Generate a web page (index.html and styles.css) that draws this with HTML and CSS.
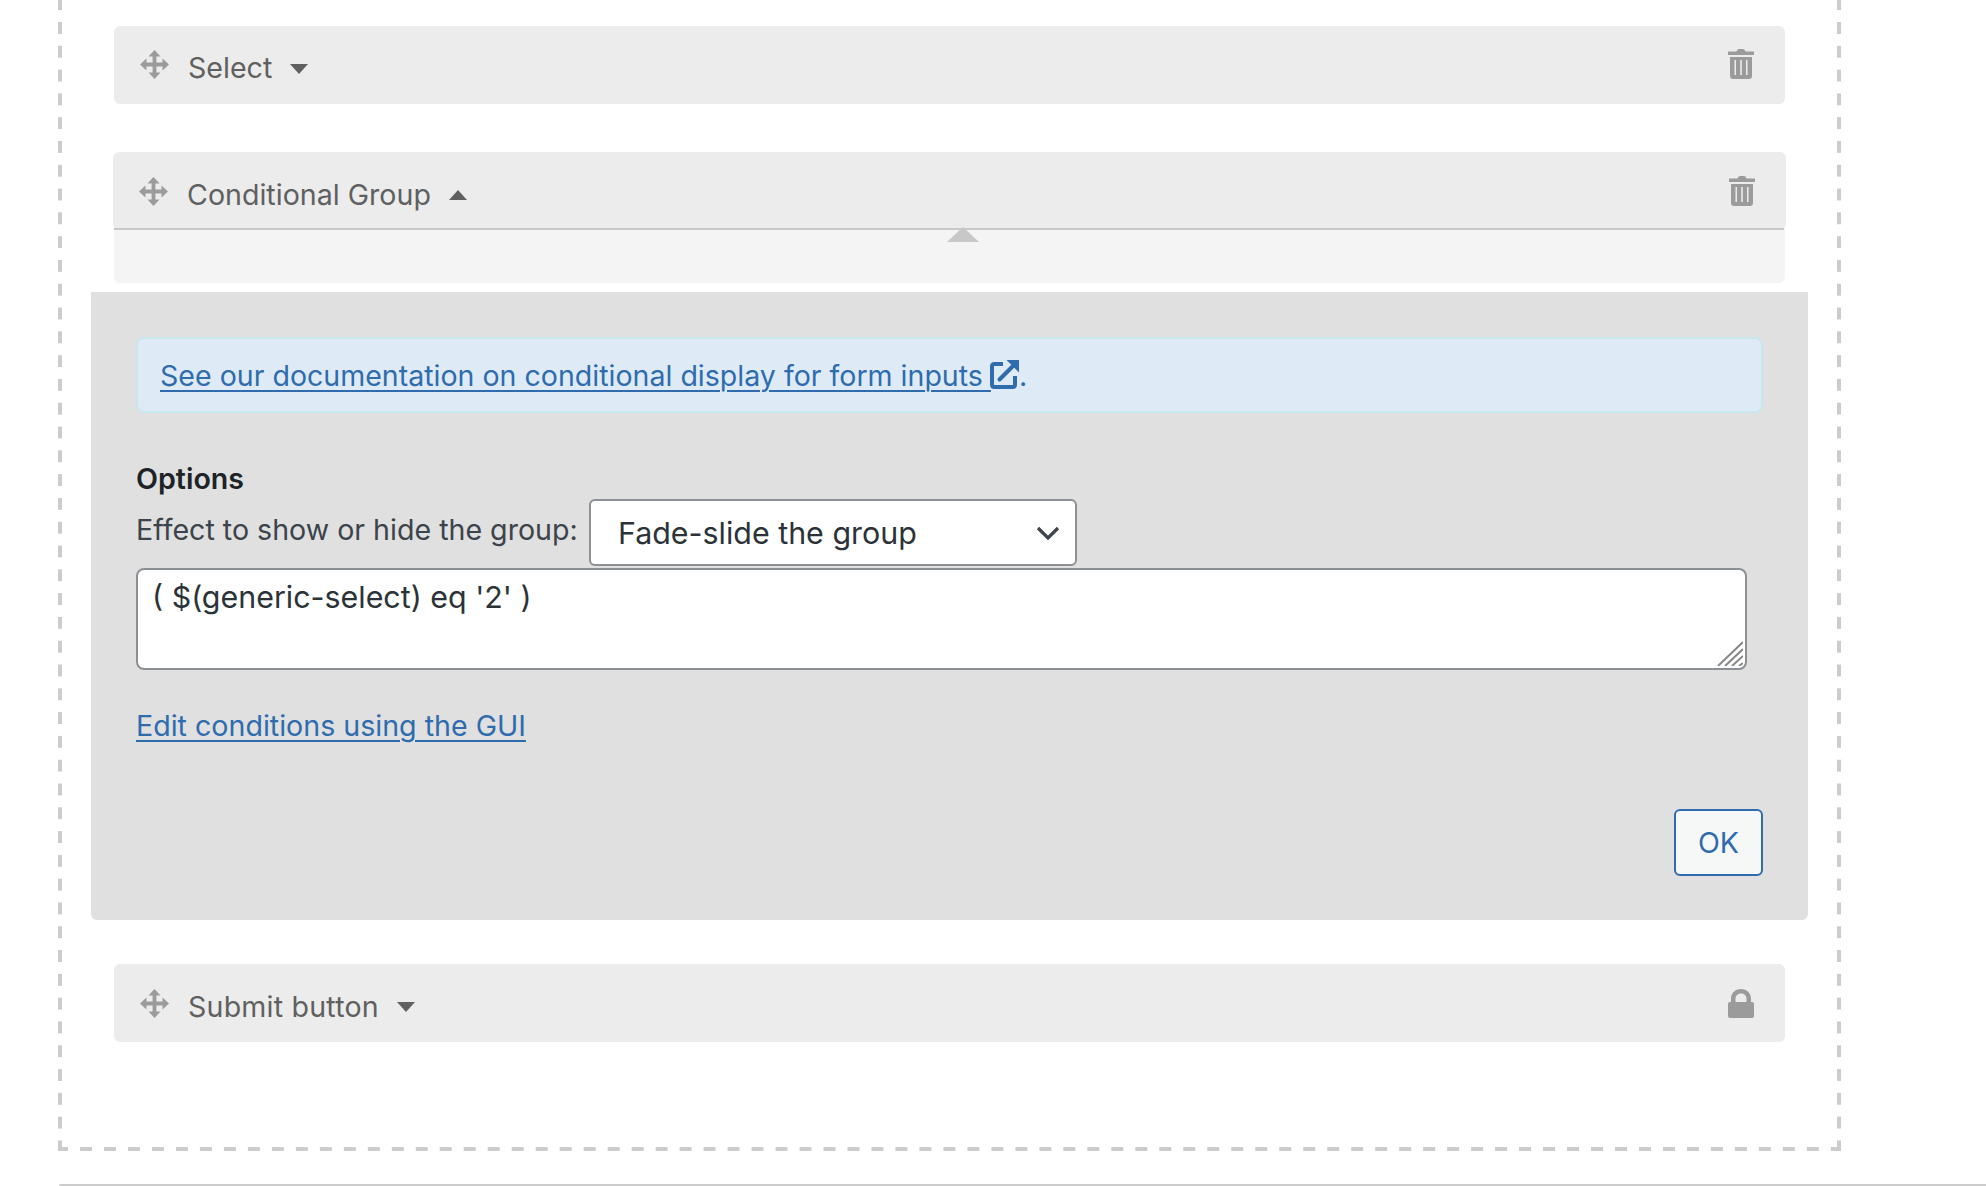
FILE: index.html
```html
<!DOCTYPE html>
<html lang="en">
<head>
<meta charset="utf-8">
<title>Form fields</title>
<link rel="stylesheet" href="styles.css">
</head>
<body>
<svg class="defs" width="0" height="0" aria-hidden="true">
  <symbol id="i-move" viewBox="0 0 29 29">
    <path d="M14.5 0 20.5 6.5H16.4V12.6H22.5V8.5L29 14.5 22.5 20.5V16.4H16.4V22.5H20.5L14.5 29 8.5 22.5H12.6V16.4H6.5V20.5L0 14.5 6.5 8.5V12.6H12.6V6.5H8.5Z"/>
  </symbol>
  <symbol id="i-trash" viewBox="0 0 26 30">
    <path d="M0 2.5H8.5Q9 0 11 0H15Q17 0 17.5 2.5H26V6H0Z"/>
    <path fill-rule="evenodd" d="M2 8H24V27Q24 30 21 30H5Q2 30 2 27ZM6.5 11V26H8V11ZM12.2 11V26H13.8V11ZM18 11V26H19.5V11Z"/>
  </symbol>
  <symbol id="i-lock" viewBox="0 0 26 29">
    <path fill-rule="evenodd" d="M3 13V9.5C3 4 7.5 0 13 0S23 4 23 9.5V13H24Q26 13 26 15V27Q26 29 24 29H2Q0 29 0 27V15Q0 13 2 13ZM7.5 13H18.5V9.5C18.5 6.5 16 4.5 13 4.5S7.5 6.5 7.5 9.5Z"/>
  </symbol>
</svg>

<main class="frame">
  <section class="row">
    <div class="row-head">
      <svg class="ico-move"><use href="#i-move"/></svg>
      <span class="row-title">Select</span>
      <span class="caret caret-down"></span>
      <svg class="ico-action ico-trash"><use href="#i-trash"/></svg>
    </div>
  </section>

  <section class="row row-open">
    <div class="row-head row-head-open">
      <svg class="ico-move"><use href="#i-move"/></svg>
      <span class="row-title">Conditional Group</span>
      <span class="caret caret-up"></span>
      <svg class="ico-action ico-trash"><use href="#i-trash"/></svg>
    </div>
    <div class="row-body"><span class="pointer"></span></div>
  </section>

  <section class="panel">
    <div class="notice">
      <a class="link" href="#">See our documentation on conditional display for form inputs </a><svg class="ico-ext" viewBox="0 0 29 29" fill="none"><path d="M13 4H4.5Q2 4 2 6.5V24.5Q2 27 4.5 27H22.5Q25 27 25 24.5V16" stroke-width="4"/><path d="M9.5 19.5 25 4" stroke-width="4" stroke-linecap="round"/><path class="ext-head" d="M16.5 0H29V12.5L25.5 9 20 3.5Z"/></svg><span class="dot">.</span>
    </div>
    <h3 class="opt-title">Options</h3>
    <div class="opt-line">
      <span class="opt-label">Effect to show or hide the group:</span>
      <div class="select">
        <span>Fade-slide the group</span>
        <svg class="chevron" viewBox="0 0 24 14" fill="none"><path d="M2 2 12 12 22 2" stroke-width="3.2"/></svg>
      </div>
    </div>
    <div class="textarea">
      ( $(generic-select) eq '2' )
      <svg class="grip" viewBox="0 0 26 25" fill="none"><path d="M1 25 26 1M8 25 26 8M15 25 26 15M22 25 26 22" stroke-width="2"/></svg>
    </div>
    <p class="gui-line"><a class="link" href="#">Edit conditions using the GUI</a></p>
    <div class="panel-foot"><button class="btn" type="button">OK</button></div>
  </section>

  <section class="row row-last">
    <div class="row-head">
      <svg class="ico-move"><use href="#i-move"/></svg>
      <span class="row-title">Submit button</span>
      <span class="caret caret-down"></span>
      <svg class="ico-action ico-lock"><use href="#i-lock"/></svg>
    </div>
  </section>
</main>
<div class="rule"></div>
</body>
</html>
```
FILE: styles.css
```css
* { box-sizing: border-box; }
html, body { margin: 0; padding: 0; background: #fff; }
body {
  font-family: Inter, "Liberation Sans", sans-serif;
  font-size: 28.6px;
  color: #3c434a;
  overflow: hidden;
  height: 1186px;
}
.defs { position: absolute; }

/* dashed drop area: top edge is above the viewport */
.frame {
  width: 1783px;
  height: 1151px;
  margin-left: 58px;
  padding: 26px 56px 0;
  background:
    linear-gradient(#ccc 50%, transparent 50%) 0 -1.8px / 4px 23.8px repeat-y,
    linear-gradient(#ccc 50%, transparent 50%) 100% -1.8px / 4px 23.8px repeat-y,
    linear-gradient(to right, #ccc 50%, transparent 50%) 22px 100% / 23.985px 4px repeat-x;
}

.row + .row-open { margin-top: 48px; }
.row-last { margin-top: 44px; }

.row-head {
  position: relative;
  display: flex;
  align-items: center;
  height: 78px;
  padding: 0 31px 0 26px;
  background: #ececec;
  border-radius: 6px;
  color: #606060;
}
.row-head-open { margin: 0 -1px; }
.row-head-open::after {
  content: "";
  position: absolute;
  left: 1px;
  right: 2px;
  bottom: 0;
  height: 2px;
  background: #c8c8c8;
}
.row-body {
  position: relative;
  height: 53px;
  background: #f4f4f4;
  border-radius: 0 0 6px 6px;
}
.pointer {
  position: absolute;
  left: 833px;
  top: -3px;
  width: 32px;
  height: 15px;
  background: #c8c8c8;
  clip-path: polygon(50% 0, 100% 100%, 0 100%);
}

.ico-move { width: 29px; height: 29px; fill: #9b9b9b; margin-bottom: 1px; flex: none; }
.row-open .ico-move, .row-last .ico-move { margin-bottom: -1px; }
.row-title { margin: 6px 0 0 19px; line-height: 34px; white-space: nowrap; }
.row-open .row-title, .row-last .row-title { margin-top: 8px; }
.row-last .row-title { letter-spacing: .2px; }
.caret {
  width: 0; height: 0; margin-left: 18px;
  border-left: 9px solid transparent;
  border-right: 9px solid transparent;
}
.caret-down { border-top: 10px solid #606060; margin-top: 7px; }
.caret-up { border-bottom: 10px solid #606060; margin-top: 7px; }

.ico-action { width: 26px; height: 30px; fill: #9b9b9b; margin-left: auto; margin-bottom: 3px; flex: none; }
.row-open .ico-action { margin-bottom: 1px; }
.ico-lock { height: 29px; margin-bottom: -1px; }

.panel {
  margin: 9px -23px 0;
  height: 628px;
  padding: 45px 45px 0;
  background: #e0e0e0;
  border-radius: 0 0 6px 6px;
}
.notice {
  display: flex;
  align-items: center;
  height: 76px;
  padding: 1px 22px 0;
  background: #deebf6;
  border: 2px solid #c8e6ee;
  border-radius: 8px;
  white-space: pre;
  font-size: 28.55px;
}
.link { color: #2e6cae; text-decoration: underline; text-decoration-thickness: 2px; text-underline-offset: 4px; }
.ico-ext { width: 29px; height: 29px; margin-left: -1px; stroke: #2e6cae; flex: none; margin-top: -3px; }
.ext-head { fill: #2e6cae; stroke: none; }
.dot { color: #2e6cae; }

.opt-title { margin: 49px 0 0; font-size: 28.6px; font-weight: 600; line-height: 34px; color: #1d2327; }
.opt-line { display: flex; align-items: flex-start; margin-top: 3px; }
.opt-label { line-height: 44px; margin-top: 9px; width: 453px; flex: none; white-space: nowrap; }
.select {
  display: flex;
  align-items: center;
  justify-content: space-between;
  width: 488px;
  height: 67px;
  padding: 0 15px 0 27px;
  background: #fff;
  border: 2px solid #8c8f94;
  border-radius: 6px;
  font-size: 30.4px;
  color: #2c3338;
}
.chevron { width: 24px; height: 14px; stroke: #3c434a; }
.textarea {
  position: relative;
  width: 1611px;
  height: 102px;
  margin-top: 2px;
  padding: 8px 14px;
  background: #fff;
  border: 2px solid #8c8f94;
  border-radius: 8px;
  font-size: 30.4px;
  line-height: 38px;
  color: #2c3338;
}
.grip { position: absolute; right: 2px; bottom: 2px; width: 26px; height: 25px; stroke: #888; }
.gui-line { margin: 37px 0 0; line-height: 38px; }
.panel-foot { display: flex; justify-content: flex-end; margin-top: 64px; }
.btn {
  width: 89px;
  height: 67px;
  padding: 0;
  background: #f6f7f7;
  border: 2px solid #2e6cae;
  border-radius: 6px;
  font: inherit;
  color: #2e6cae;
}
.rule { height: 2px; margin: 33px 0 0 59px; background: #ccc; border-top-left-radius: 2px; }
```
